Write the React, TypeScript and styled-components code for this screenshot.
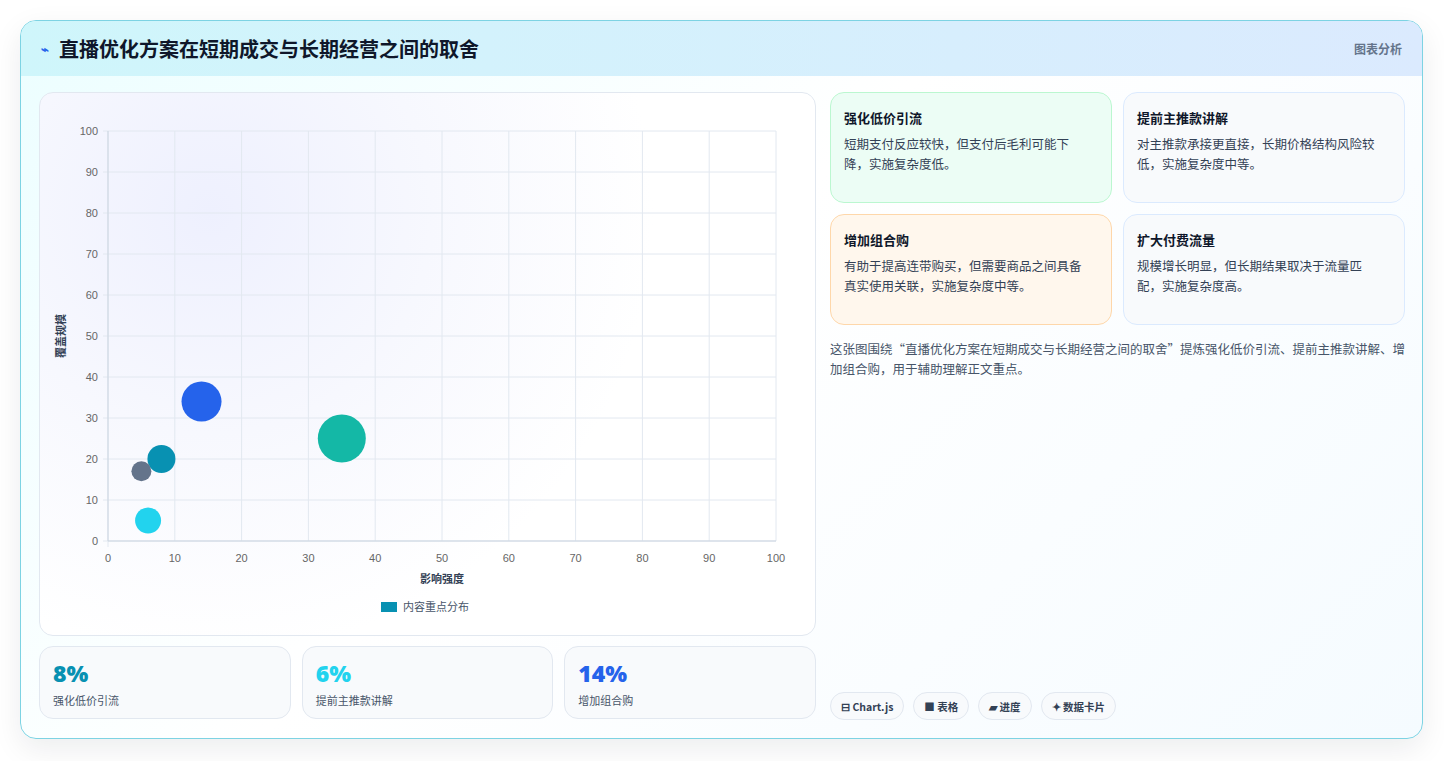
import React from "react";
import styled, { createGlobalStyle } from "styled-components";

const G = createGlobalStyle`
body{margin:0;background:#f1f5f9;font-family:"Noto Sans CJK SC","Noto Sans",sans-serif;}
`;
const Page = styled.div`width:1444px;height:761px;background:#fff;padding:20px 20px 0 20px;box-sizing:border-box;`;
const Card = styled.div`width:1403px;height:719px;box-sizing:border-box;border:1px solid #7dd3e3;border-radius:16px;overflow:hidden;
background:linear-gradient(135deg,#ecfeff 0%,#ffffff 45%,#f5fbff 100%);box-shadow:0 10px 30px rgba(15,23,42,.08);display:flex;flex-direction:column;`;
const Header = styled.div`height:55px;flex:none;display:flex;align-items:center;justify-content:space-between;padding:0 20px 0 20px;
background:linear-gradient(90deg,#cff6fb,#dbeafe);`;
const Title = styled.h1`margin:0;font-size:20px;font-weight:700;color:#0f172a;display:flex;align-items:center;gap:10px;`;
const Tag = styled.span`font-size:12px;color:#64748b;font-weight:600;`;
const Body = styled.div`flex:1;display:grid;grid-template-columns:777px 575px;gap:14px;padding:16px 18px 18px 18px;`;
const Left = styled.div`display:flex;flex-direction:column;gap:10px;`;
const ChartBox = styled.div`height:544px;box-sizing:border-box;border:1px solid #e2e8f0;border-radius:14px;position:relative;overflow:hidden;
background:radial-gradient(circle at 22% 22%,#eef0fe 0%,#f7f8fe 30%,#ffffff 60%);`;
const Stats = styled.div`display:grid;grid-template-columns:repeat(3,1fr);gap:11px;`;
const Stat = styled.div`height:73px;box-sizing:border-box;border:1px solid #e2e8f0;border-radius:14px;padding:12px 13px;background:#f8fafc;`;
const Num = styled.div<{c:string}>`font-family:"Open Sans",sans-serif;font-size:23px;font-weight:800;color:${p=>p.c};line-height:28px;`;
const SLabel = styled.div`font-size:11px;color:#475569;margin-top:5px;`;
const Right = styled.div`display:flex;flex-direction:column;`;
const Grid = styled.div`display:grid;grid-template-columns:1fr 1fr;gap:11px;`;
const Info = styled.div<{bg:string;bd:string}>`height:111px;box-sizing:border-box;border:1px solid ${p=>p.bd};border-radius:14px;background:${p=>p.bg};padding:15px 13px;`;
const ITitle = styled.div`font-size:13px;font-weight:700;color:#0f172a;margin-bottom:7px;`;
const IText = styled.div`font-size:12.5px;line-height:20px;color:#334155;padding-right:8px;`;
const Desc = styled.p`margin:14px 0 0;font-size:12.5px;line-height:20px;color:#475569;`;
const Chips = styled.div`margin-top:auto;display:flex;gap:9px;`;
const Chip = styled.span`height:28px;box-sizing:border-box;border:1px solid #e2e8f0;border-radius:14px;background:#f8fafc;padding:0 10px;display:flex;align-items:center;gap:3px;font-size:10.5px;font-weight:600;color:#334155;`;

const X0=68,Y0=38,W=668,H=410;
const px=(v:number)=>X0+v/100*W, py=(v:number)=>Y0+H-v/100*H;
const ticks=[0,10,20,30,40,50,60,70,80,90,100];
const bubbles=[{x:14,y:34,r:20,c:"#2563eb"},{x:35,y:25,r:24,c:"#14b8a6"},{x:8,y:20,r:14,c:"#0891b2"},{x:5,y:17,r:10,c:"#64748b"},{x:6,y:5,r:13,c:"#22d3ee"}];

function Chart(){
  return <svg width="775" height="542" style={{display:"block"}} fontFamily="Liberation Sans, sans-serif">
    {ticks.map(t=><g key={t}>
      <line x1={px(t)} x2={px(t)} y1={Y0} y2={Y0+H+(t===0?6:0)} stroke="#e2e8f0"/>
      <line x1={X0-5} x2={X0+W} y1={py(t)} y2={py(t)} stroke="#e2e8f0"/>
      <text x={X0-10} y={py(t)+4} fontSize="11" fill="#666" textAnchor="end">{t}</text>
      <text x={px(t)} y={Y0+H+21} fontSize="11" fill="#666" textAnchor="middle">{t}</text>
    </g>)}
    <line x1={X0} x2={X0} y1={Y0} y2={Y0+H} stroke="#cbd5e1"/>
    <line x1={X0} x2={X0+W} y1={Y0+H} y2={Y0+H} stroke="#cbd5e1"/>
    {bubbles.map((b,i)=><circle key={i} cx={px(b.x)} cy={py(b.y)} r={b.r} fill={b.c}/>)}
    <text x={X0+334} y={490} fontSize="11" fontWeight="700" fill="#334155" textAnchor="middle" fontFamily="Noto Sans CJK SC">影响强度</text>
    <text transform={`translate(25,${Y0+205}) rotate(-90)`} fontSize="11" fontWeight="700" fill="#334155" textAnchor="middle" fontFamily="Noto Sans CJK SC">覆盖规模</text>
    <rect x={341} y={509} width={16} height={10} fill="#0891b2"/>
    <text x={363} y={518} fontSize="11" fill="#475569" fontFamily="Noto Sans CJK SC">内容重点分布</text>
  </svg>;
}

export default function App(){
  return <Page><G/><Card>
    <Header><Title><span style={{color:"#2563eb",fontSize:13}}>⌁</span>直播优化方案在短期成交与长期经营之间的取舍</Title><Tag>图表分析</Tag></Header>
    <Body>
      <Left>
        <ChartBox><Chart/></ChartBox>
        <Stats>
          <Stat><Num c="#0891b2">8%</Num><SLabel>强化低价引流</SLabel></Stat>
          <Stat><Num c="#22d3ee">6%</Num><SLabel>提前主推款讲解</SLabel></Stat>
          <Stat><Num c="#2563eb">14%</Num><SLabel>增加组合购</SLabel></Stat>
        </Stats>
      </Left>
      <Right>
        <Grid>
          <Info bg="#ecfdf5" bd="#bbf7d0"><ITitle>强化低价引流</ITitle><IText>短期支付反应较快，但支付后毛利可能下降，实施复杂度低。</IText></Info>
          <Info bg="#f8fafc" bd="#dbeafe"><ITitle>提前主推款讲解</ITitle><IText>对主推款承接更直接，长期价格结构风险较低，实施复杂度中等。</IText></Info>
          <Info bg="#fff7ed" bd="#fed7aa"><ITitle>增加组合购</ITitle><IText>有助于提高连带购买，但需要商品之间具备真实使用关联，实施复杂度中等。</IText></Info>
          <Info bg="#f8fafc" bd="#dbeafe"><ITitle>扩大付费流量</ITitle><IText>规模增长明显，但长期结果取决于流量匹配，实施复杂度高。</IText></Info>
        </Grid>
        <Desc>这张图围绕“直播优化方案在短期成交与长期经营之间的取舍”提炼强化低价引流、提前主推款讲解、增加组合购，用于辅助理解正文重点。</Desc>
        <Chips>
          <Chip>⊟ Chart.js</Chip><Chip>■ 表格</Chip><Chip>▰ 进度</Chip><Chip>✦ 数据卡片</Chip>
        </Chips>
      </Right>
    </Body>
  </Card></Page>;
}
